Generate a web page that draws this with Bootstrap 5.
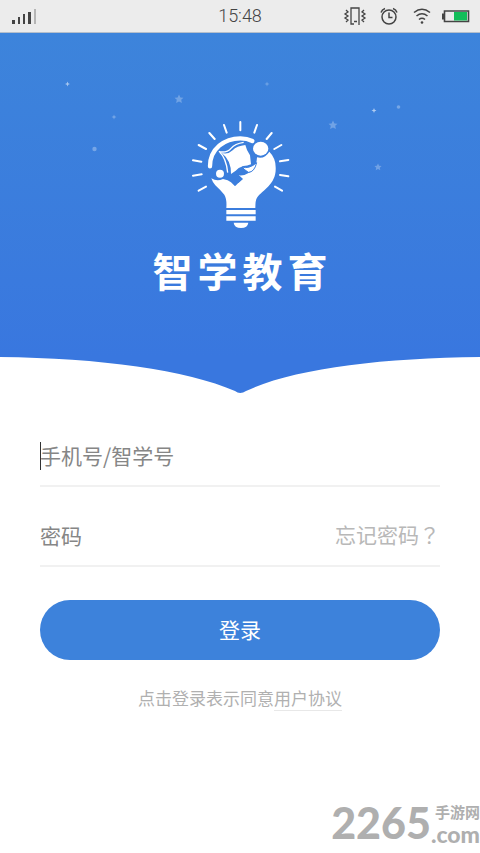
<!DOCTYPE html>
<html lang="zh-CN">
<head>
<meta charset="utf-8">
<meta name="viewport" content="width=device-width, initial-scale=1">
<title>智学教育</title>
<link rel="stylesheet" href="https://cdn.jsdelivr.net/npm/bootstrap@5.3.0/dist/css/bootstrap.min.css">
<style>
body { font-family: "Noto Sans CJK SC", sans-serif; background: #fff; }
svg { display: block; }
.status-bar { height: 33px; background: #ececec; border-bottom: 1px solid #b4bfcc; color: #444; }
.status-bar .clock { font-family: Roboto, sans-serif; font-size: 18px; font-weight: 300; line-height: 32px; }
.hero { background: linear-gradient(#3d84db, #3977df); height: 324px; padding-top: 77px; }
.hero h1 { font-size: 40px; line-height: 60px; margin-top: 5px; font-weight: 700; gap: 5px; }
.curve { height: 37px; }
.login-form { padding: 31px 40px 0; }
.field { height: 62px; border-bottom: 2px solid #f1f1f1; margin-bottom: 18px; }
.field .form-control { height: 44px; font-size: 21px; line-height: 44px; color: #666; }
.field .form-control::placeholder { color: #868686; opacity: 1; }
.caret { left: 0; top: 17px; width: 1px; height: 28px; background: #333; }
.forgot { font-size: 21px; color: #b8b8b8; }
.forgot span { font-family: "Noto Sans CJK TC", sans-serif; }
.btn-login { height: 60px; font-size: 21px; background: #3d82db; color: #fff; margin-top: 15px; }
.btn-login:hover { background: #3977df; color: #fff; }
.agreement { font-size: 17px; line-height: 24px; color: #b0b0b0; margin-top: 26px; }
.agreement a { color: #b0b0b0; border-bottom: 1px solid #e8e8e8; }
.site-mark { color: #afafaf; font-family: Lato, "Noto Sans CJK SC", sans-serif; font-weight: 900; }
.site-mark .digits { font-size: 43px; line-height: 52px; }
.site-mark .cn { font-size: 15px; line-height: 22px; font-weight: 700; }
.site-mark .dom { font-size: 23px; line-height: 22px; }
</style>
<script src="https://cdn.jsdelivr.net/npm/bootstrap@5.3.0/dist/js/bootstrap.bundle.min.js"></script>
</head>
<body class="d-flex flex-column min-vh-100">
<header class="status-bar d-flex align-items-center px-2">
  <div class="flex-fill w-25 ps-1">
    <svg width="24" height="16" viewBox="0 0 24 16" aria-hidden="true"><g fill="#444"><path d="M0 12h3v4H0zM6 9h2v7H6zM11 6h2v10h-2zM16 4h3v12h-3z"/><path fill="#b5b5b5" d="M22 1h2v15h-2z"/></g></svg>
  </div>
  <div class="clock">15:48</div>
  <div class="flex-fill w-25 d-flex justify-content-end align-items-center">
    <svg width="130" height="24" viewBox="0 0 130 24" fill="none" stroke="#444" aria-hidden="true">
      <path stroke-width="1.300" d="M12 20H9V4h8v17M12 17.500h3M4 6l2 2-3 2 3 2-3 2 3 2-2 2M22 6l-2 2 3 2-3 2 3 2-3 2 2 2"/>
      <circle cx="47" cy="13" r="7" stroke-width="1.500"/><path stroke-width="1.500" d="M47 8.500v5h3.500M39 8.500q1-3 4-4M55 8.500q-1-3-4-4"/>
      <path stroke-width="1.600" d="M72 8.500q8-6.500 16 0M74.500 12q5.500-4.500 11 0M77 15.500q3-2.500 6 0"/><circle cx="80" cy="18.500" r="1.300" fill="#444" stroke="none"/>
      <path stroke-width="1.600" d="M102.500 7h24v10.500h-24z"/><path fill="#444" stroke="none" d="M100 9.500h3v6h-3z"/><path fill="#13bd59" stroke="none" d="M112 8h13v8.500h-13z"/>
    </svg>
  </div>
</header>

<section class="hero position-relative text-white text-center">
  <svg class="position-absolute top-0 start-0 w-100 h-100" viewBox="0 33 480 324" preserveAspectRatio="xMidYMid slice" aria-hidden="true">
    <defs>
      <path id="star" d="M0-4.500 1.400-1.600 4.500-1.300 2.200.8 2.900 4 0 2.400-2.900 4-2.200.8-4.500-1.300-1.400-1.600z"/>
      <path id="spark" d="M0-2.500.7-.7 2.500 0 .7.700 0 2.500-.7.700-2.500 0-.7-.7z"/>
    </defs>
    <g fill="#fff">
      <use href="#star" x="179" y="99" opacity=".27"/><use href="#star" x="333" y="125" opacity=".27"/><use href="#star" transform="translate(378 167) scale(.8)" opacity=".27"/>
      <use href="#spark" x="67.500" y="84" opacity=".55"/><use href="#spark" x="114" y="117" opacity=".3"/><use href="#spark" x="267" y="84" opacity=".25"/><use href="#spark" x="374" y="110.500" opacity=".6"/>
      <circle cx="94.500" cy="149" r="2.200" opacity=".3"/><circle cx="398.500" cy="107" r="1.800" opacity=".3"/>
    </g>
  </svg>
  <svg class="mx-auto" width="120" height="125" viewBox="0 0 360 375" role="img" aria-label="智学教育">
    <g stroke="#fff" stroke-width="6" stroke-linecap="round" fill="none">
      <path d="M181 36v25M132 45l8 23M231 45l-8 23M88 69l16 18M275 69l-15 18M56 105l22 12M304 105l-21 12M39 151l25 4M325 150l-25 4M39 197l26-4M325 199l-25-4M56 242l22-12M306 242l-21-12"/>
      <path d="M90 169C90 116 134 85 181 85q20 0 36 8" stroke-width="13"/>
    </g>
    <g fill="#fff">
      <ellipse cx="242" cy="116" rx="23" ry="21"/>
      <circle cx="120" cy="191" r="12"/>
      <path d="M94 205Q111 216 129 207Q145 210 153 217L165 229 187 207 172 195Q190 200 210 187Q229 176 231 142Q254 148 268 125Q287 144 287 172C290 222 249 239 231 263Q226 270 226 294H139Q141 267 133 254Q121 240 106 226Q98 218 94 205z"/>
      <path d="M139 300h88v13h-88zM139 319h88v13h-88z"/>
      <path d="M161 338h44q-2 16-22 16t-22-16z"/>
      <path d="M125 129Q145 134 158 121Q170 108 196 105Q199 119 210 136L213 163Q202 168 190 168Q174 173 167 182L153 192Q154 151 125 129z"/>
    </g>
    <path d="M186 171Q207 178 230 158Q223 187 205 187Q194 180 186 171z" fill="#fff" stroke="#3b7edd" stroke-width="3"/>
    <g fill="none" stroke="#fff" stroke-width="4">
      <path d="M117 124Q139 145 143 188M117 125Q142 129 153 115Q165 101 191 97"/>
    </g>
    <path d="M160 207l14-14 15 14-14 12z" fill="#3b7edd"/>
  </svg>
  <h1 class="mb-0 d-flex justify-content-center"><span>智</span><span>学</span><span>教</span><span>育</span></h1>
</section>
<svg class="curve w-100" viewBox="0 0 480 37" preserveAspectRatio="none" aria-hidden="true"><path fill="#3977df" d="M0 0C100 1 187 13 235 34Q240 38 246 34C292 12 380 1 480 0z"/></svg>

<main>
  <form class="login-form">
    <div class="field position-relative d-flex align-items-center">
      <label class="visually-hidden" for="account">手机号/智学号</label>
      <input id="account" type="text" class="form-control border-0 rounded-0 p-0 shadow-none bg-transparent" placeholder="手机号/智学号">
      <span class="caret position-absolute"></span>
    </div>
    <div class="field d-flex align-items-center">
      <label class="visually-hidden" for="password">密码</label>
      <input id="password" type="password" class="form-control flex-fill border-0 rounded-0 p-0 shadow-none bg-transparent" placeholder="密码">
      <a class="forgot text-decoration-none text-nowrap" href="#">忘记密码<span lang="zh-TW">？</span></a>
    </div>
    <button type="submit" class="btn btn-login w-100 border-0 rounded-pill p-0">登录</button>
    <p class="agreement text-center mb-0">点击登录表示同意<a class="text-decoration-none" href="#">用户协议</a></p>
  </form>
</main>

<footer class="site-mark mt-auto d-flex justify-content-end align-items-center pb-1">
  <span class="digits">2265</span>
  <span class="d-flex flex-column align-items-end"><span class="cn">手游网</span><span class="dom">.com</span></span>
</footer>
</body>
</html>
